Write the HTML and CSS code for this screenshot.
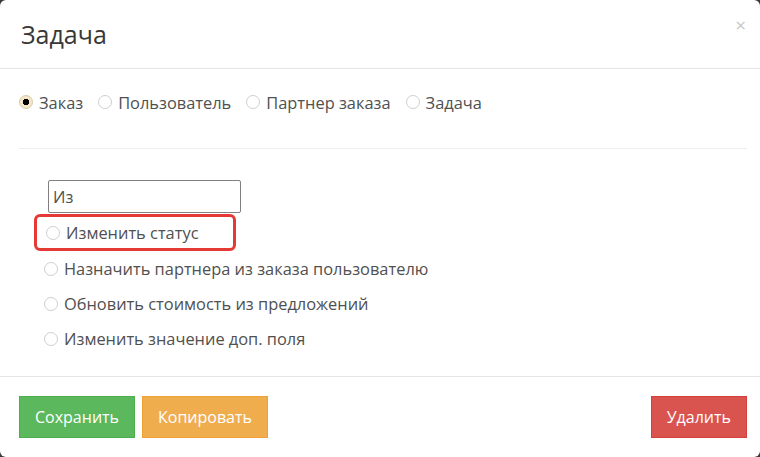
FILE: index.html
```html
<!DOCTYPE html>
<html lang="ru">
<head>
    <meta charset="UTF-8">
    <meta name="viewport" content="width=device-width, initial-scale=1.0">
    <title>Задача</title>
    <link rel="stylesheet" href="styles.css">
</head>
<body>
<div class="modal">
    <div class="modal-header">
        <h4 class="modal-title">Задача</h4>
        <span class="close">&times;</span>
    </div>

    <div class="modal-body">
        <div class="type-row">
            <label class="radio"><input type="radio" name="type" checked> Заказ</label>
            <label class="radio"><input type="radio" name="type"> Пользователь</label>
            <label class="radio"><input type="radio" name="type"> Партнер заказа</label>
            <label class="radio"><input type="radio" name="type"> Задача</label>
        </div>

        <hr class="divider">

        <div class="actions">
            <input class="from-input" type="text" value="Из">
            <label class="radio action highlighted"><input type="radio" name="action"> Изменить статус</label>
            <label class="radio action"><input type="radio" name="action"> Назначить партнера из заказа пользователю</label>
            <label class="radio action"><input type="radio" name="action"> Обновить стоимость из предложений</label>
            <label class="radio action"><input type="radio" name="action"> Изменить значение доп. поля</label>
        </div>
    </div>

    <div class="modal-footer">
        <button class="btn btn-success">Сохранить</button>
        <button class="btn btn-warning">Копировать</button>
        <button class="btn btn-danger">Удалить</button>
    </div>
</div>
</body>
</html>
```

FILE: styles.css
```css
html, body {
  margin: 0;
  height: 100%;
}

body {
  background-color: #3a3a3a;
  font-family: "Open Sans", "Noto Sans", sans-serif;
  font-size: 16.4px;
  color: #333;
}

.modal {
  box-sizing: border-box;
  height: 457px;
  display: flex;
  flex-direction: column;
  background-color: #fff;
  border-radius: 6px;
}

.modal-header {
  position: relative;
  height: 68px;
  padding: 0 21px;
  display: flex;
  align-items: center;
  border-bottom: 1px solid #e5e5e5;
}

.modal-title {
  margin: 0;
  font-weight: 400;
  font-size: 25px;
  color: #383838;
}

.close {
  position: absolute;
  top: 12px;
  right: 14px;
  font-size: 19px;
  color: #c8c8c8;
}

.modal-body {
  flex: 1;
  padding: 0 13px 0 19px;
}

.type-row {
  display: flex;
  gap: 15px;
  margin-top: 22px;
  height: 22px;
  align-items: center;
}

.radio {
  display: flex;
  align-items: center;
  gap: 6px;
  color: #505050;
}

.radio input {
  appearance: none;
  margin: 0;
  width: 14px;
  height: 14px;
  border: 1px solid #cfcfcf;
  border-radius: 50%;
  background: #fff;
}

.radio input:checked {
  border-color: #d8c8a8;
  background-image: radial-gradient(circle, #000 0 3px, #f5e6c8 3.5px);
}

.divider {
  margin: 35px 0 0;
  border: 0;
  border-top: 1px solid #eee;
}

.actions {
  display: flex;
  flex-direction: column;
  align-items: flex-start;
  padding-top: 31px;
  padding-left: 25px;
}

.from-input {
  box-sizing: border-box;
  width: 193px;
  height: 33px;
  margin-left: 4px;
  padding: 2px 4px;
  border: 1px solid #808080;
  border-radius: 2px;
  font-family: inherit;
  font-size: 16.4px;
  color: #505050;
}

.action {
  height: 35px;
}

.highlighted {
  box-sizing: border-box;
  margin-left: -10px;
  padding-left: 9px;
  width: 202px;
  height: 37px;
  border: 3px solid #e53935;
  border-radius: 6px;
  margin-top: 1px;
}

.modal-footer {
  height: 80px;
  padding: 0 13px 0 19px;
  display: flex;
  align-items: center;
  gap: 7px;
  border-top: 1px solid #e5e5e5;
}

.btn {
  height: 42px;
  padding: 0 15px;
  border: 1px solid transparent;
  font-family: inherit;
  font-size: 16px;
  color: #fff;
}

.btn-success {
  background-color: #5cb85c;
  border-color: #4cae4c;
}

.btn-warning {
  background-color: #f0ad4e;
  border-color: #eea236;
}

.btn-danger {
  margin-left: auto;
  background-color: #d9534f;
  border-color: #d43f3a;
}
```
